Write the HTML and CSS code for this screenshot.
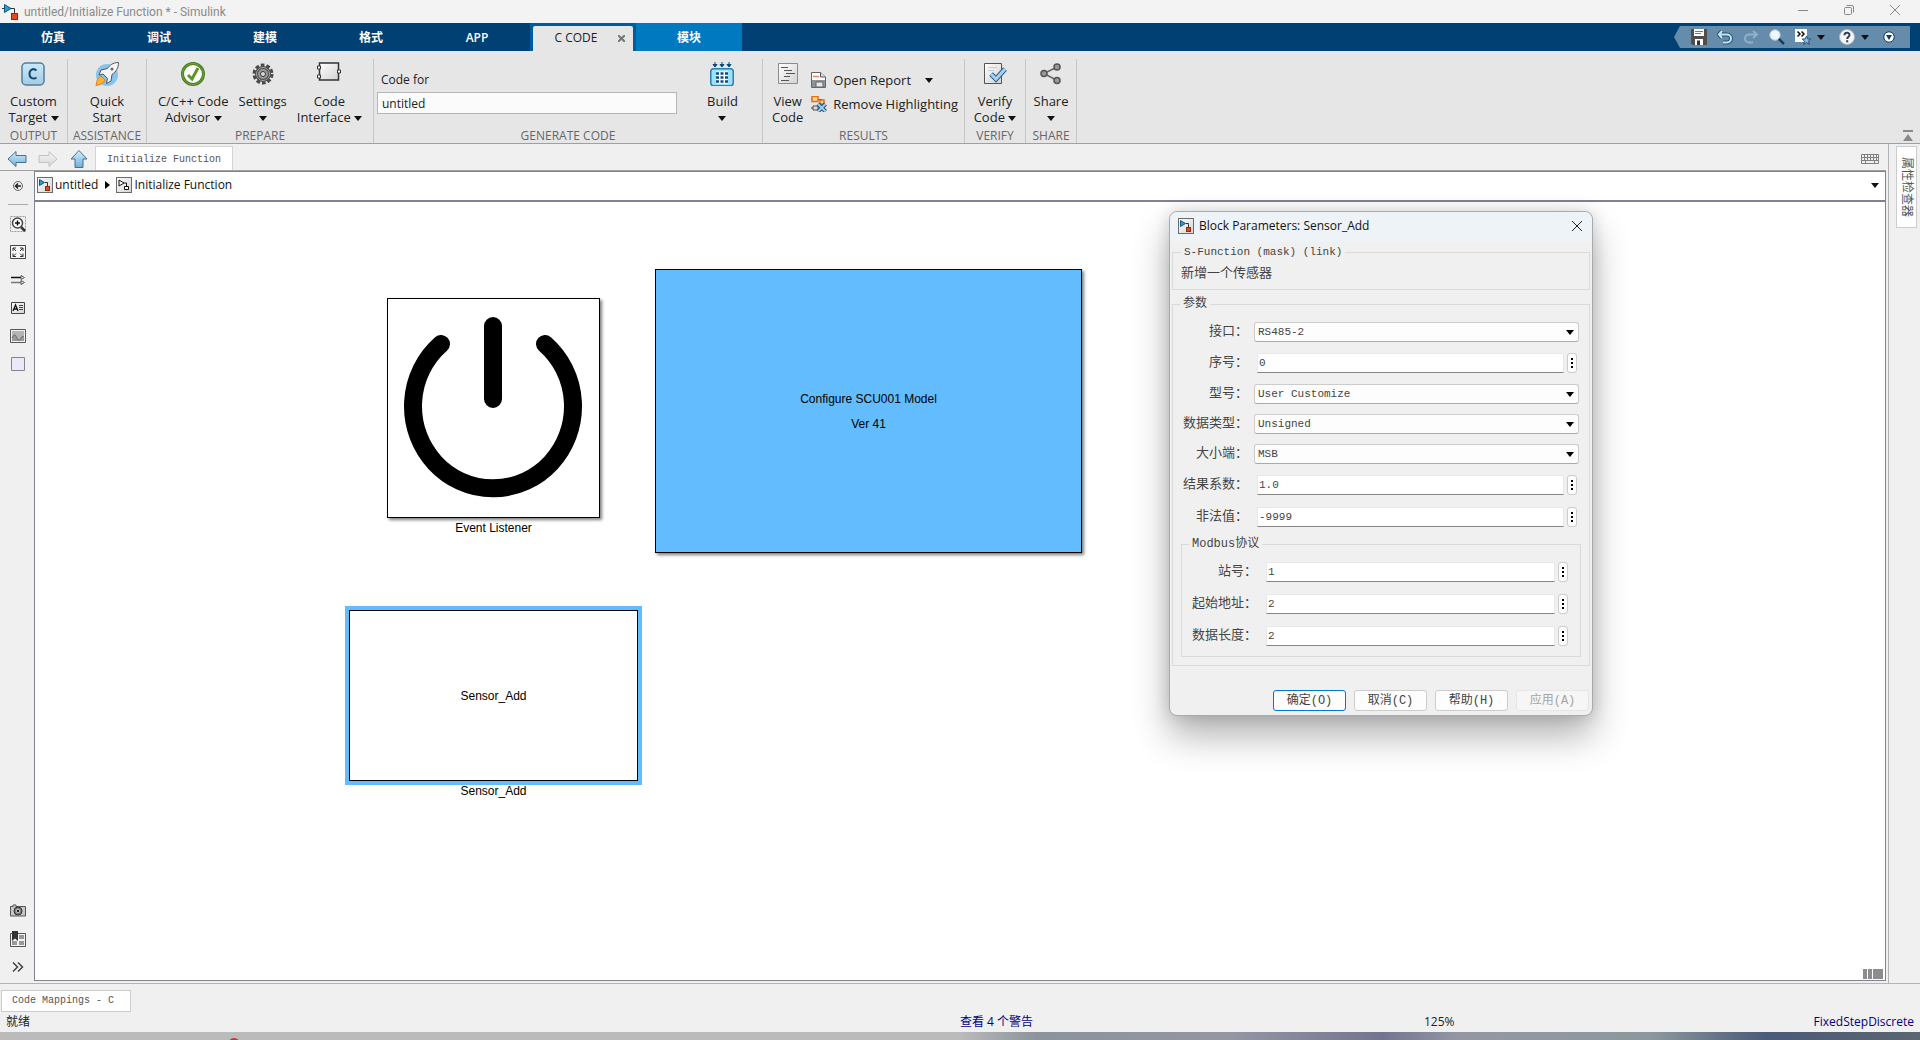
FILE: index.html
```html
<!DOCTYPE html>
<html lang="zh-CN">
<head>
    <meta charset="UTF-8">
    <meta name="viewport" content="width=device-width, initial-scale=1.0">
    <title>untitled/Initialize Function * - Simulink</title>
    <link rel="stylesheet" href="styles.css">
</head>
<body>
    <!-- shared icons -->
    <svg class="defs" aria-hidden="true">
        <defs>
            <linearGradient id="gBlue" x1="0" y1="0" x2="0" y2="1"><stop offset="0" stop-color="#d5eefb"/><stop offset="1" stop-color="#6fb0d8"/></linearGradient>
            <linearGradient id="gTarget" x1="0" y1="0" x2="0" y2="1"><stop offset="0" stop-color="#c9eafa"/><stop offset="1" stop-color="#a5cbe2"/></linearGradient>
            <linearGradient id="gPale" x1="0" y1="0" x2="0" y2="1"><stop offset="0" stop-color="#f4f4f4"/><stop offset="1" stop-color="#d8d8d8"/></linearGradient>
            <linearGradient id="gPaper" x1="0" y1="0" x2="1" y2="1"><stop offset="0" stop-color="#ffffff"/><stop offset="1" stop-color="#d2d2d2"/></linearGradient>
            <symbol id="model" viewBox="0 0 16 16">
                <rect x=".5" y=".5" width="15" height="15" fill="url(#gPaper)" stroke="#6b6b6b"/>
                <path d="M8 5.500h2.500V9" fill="none" stroke="#333"/>
                <path d="M2.500 2.500v6L7.500 5.500z" fill="#2b9bd6" stroke="#14557d"/>
                <rect x="8.500" y="9.500" width="4" height="4" fill="#e8481c" stroke="#8f2a0c"/>
            </symbol>
            <symbol id="subsystem" viewBox="0 0 16 16">
                <rect x=".5" y=".5" width="15" height="15" fill="url(#gPaper)" stroke="#6b6b6b"/>
                <path d="M3 3v6l5-3zM8 6h2.500v3M8.500 9.500h4v3h-4z" fill="#fff" stroke="#111"/>
            </symbol>
        </defs>
    </svg>

    <header class="titlebar">
        <svg class="i16" viewBox="0 0 16 16"><path d="M0 4.500h3M8 4.500h4.500v5" fill="none" stroke="#333"/><path d="M2.500 .5v8L9 4.500z" fill="#2b9bd6" stroke="#14557d"/><rect x="9.500" y="9.500" width="6" height="6" fill="#e8481c" stroke="#8f2a0c"/></svg>
        <span class="title">untitled/Initialize Function * - Simulink</span>
        <div class="window-buttons">
            <button aria-label="最小化"><svg viewBox="0 0 10 10"><path d="M0 5.500h10"/></svg></button>
            <button aria-label="还原"><svg viewBox="0 0 10 10"><rect x=".5" y="2.500" width="7" height="7" rx="1"/><path d="M2.500.5h5.500a1.500 1.500 0 0 1 1.500 1.500v5.500"/></svg></button>
            <button aria-label="关闭"><svg viewBox="0 0 10 10"><path d="M0 0l10 10M10 0L0 10"/></svg></button>
        </div>
    </header>

    <nav class="tabs">
        <button class="tab">仿真</button>
        <button class="tab">调试</button>
        <button class="tab">建模</button>
        <button class="tab">格式</button>
        <button class="tab">APP</button>
        <div class="tab-active">
            <button class="tab-name">C CODE</button>
            <button class="tab-close" aria-label="关闭"><svg viewBox="0 0 7 7"><path d="M0 0l7 7M7 0L0 7"/></svg></button>
        </div>
        <button class="tab tab-context">模块</button>
        <div class="quick-access">
            <button aria-label="保存"><svg class="i16" viewBox="0 0 16 16"><path d="M0 0h16v16H1.500L0 14.500z" fill="#514d4b"/><path d="M3 0h10v7H3z" fill="#fff"/><path d="M4 2.500h8M4 4.500h6" stroke="#777"/><path d="M4 10h8v6H4z" fill="#fff"/><path d="M6 11.500h3V16H6z" fill="#333"/></svg></button>
            <button aria-label="撤销"><svg class="i16" viewBox="0 0 16 16"><path d="M5 2L2 5.500 5 9M2.500 5.500H10a3.500 3.500 0 0 1 0 8H6" fill="none" stroke="#2b5273" stroke-width="4"/><path d="M5 2L2 5.500 5 9M2.500 5.500H10a3.500 3.500 0 0 1 0 8H6" fill="none" stroke="#c4e4f7" stroke-width="2"/></svg></button>
            <button aria-label="重做" disabled><svg class="i16" viewBox="0 0 16 16"><path d="M10 2l4 3.500L10 9M13.500 5.500H6a3.500 3.500 0 0 0 0 8h4" fill="none" stroke="#8fb0c9" stroke-width="2"/></svg></button>
            <button aria-label="搜索"><svg class="i16" viewBox="0 0 16 16"><path d="M9 9l6 6" stroke="#143f68" stroke-width="2.500"/><circle cx="6" cy="6" r="5.200" fill="#edf6fb" stroke="#b5c9d6"/></svg></button>
            <button class="wide" aria-label="收藏"><svg class="i16" viewBox="0 0 16 16"><path d="M0 0h12v13H0z" fill="#fff"/><path d="M2.500 2.500L5 5 2.500 7.500M6.500 2.500L9 5 6.500 7.500" fill="none" stroke="#111" stroke-width="1.500"/><path d="M11.500 7l1.300 3h3l-2.300 2 1 3.500-3-2-3 2 1-3.500-2.300-2h3z" fill="#8fb8da" stroke="#29517a"/></svg><i class="caret"></i></button>
            <button class="wide" aria-label="帮助"><svg class="i16" viewBox="0 0 16 16"><circle cx="8" cy="8" r="7.500" fill="#f5f5f5" stroke="#a9b7c2"/><path d="M5.500 6.200C5.500 3 10.500 3 10.500 6c0 1.700-2.300 1.800-2.300 4M8.200 11.300v2" fill="none" stroke="#2b3f55" stroke-width="2"/></svg><i class="caret"></i></button>
            <button aria-label="更多"><svg class="i12" viewBox="0 0 12 12"><circle cx="6" cy="6" r="5.200" fill="#fff" stroke="#0b3c66"/><path d="M3 4h6L6 9z" fill="#0b3c66"/></svg></button>
        </div>
    </nav>

    <section class="ribbon">
        <div class="group group-output">
            <div class="group-items">
                <button class="tool">
                    <svg class="i24" viewBox="0 0 24 24"><rect x="1" y="1" width="22" height="22" rx="4" fill="url(#gTarget)" stroke="#4f7f9e" stroke-width="1.500"/><path d="M15.500 8.500C12 5.500 8.500 8 8.500 12c0 4.500 4 5.500 7 3.500" fill="none" stroke="#134a75" stroke-width="2"/></svg>
                    <span>Custom<br>Target <i class="caret"></i></span>
                </button>
            </div>
            <div class="group-name">OUTPUT</div>
        </div>
        <div class="group group-assistance">
            <div class="group-items">
                <button class="tool">
                    <svg class="i24" viewBox="0 0 24 24"><circle cx="12" cy="13" r="11" fill="#85c4f0"/><path d="M6 14l4 4c-2 4-5 4-9 6 1-5 1-8 5-10z" fill="#ffb52e" stroke="#e0781b"/><path d="M23.500.5c-6 0-9 3-11 6L6 8l-2 5 4-1 4.500 4.500-1 5L16 19l1-6.500c4-3 6.500-6 6.500-12z" fill="#f6f6f6" stroke="#555"/><circle cx="17" cy="7" r="1.500" fill="#666"/></svg>
                    <span>Quick<br>Start</span>
                </button>
            </div>
            <div class="group-name">ASSISTANCE</div>
        </div>
        <div class="group group-prepare">
            <div class="group-items">
                <button class="tool">
                    <svg class="i24" viewBox="0 0 24 24"><circle cx="12" cy="12" r="10.500" fill="#fdfdfd" stroke="#4c7a22" stroke-width="3"/><circle cx="12" cy="12" r="10.500" fill="none" stroke="#74a83c"/><path d="M7 13l4 4 6-11" fill="none" stroke="#5d9626" stroke-width="3"/></svg>
                    <span>C/C++ Code<br>Advisor <i class="caret"></i></span>
                </button>
                <button class="tool">
                    <svg class="i24" viewBox="0 0 24 24"><circle cx="12" cy="12" r="9" fill="none" stroke="#4a4a4a" stroke-width="3" stroke-dasharray="3.700 2"/><circle cx="12" cy="12" r="6.500" fill="#9a9a9a" stroke="#4a4a4a" stroke-width="3"/><circle cx="12" cy="12" r="6.500" fill="none" stroke="#a5a5a5"/><circle cx="12" cy="12" r="2.500" fill="#ddd" stroke="#333"/></svg>
                    <span>Settings<br><i class="caret"></i></span>
                </button>
                <button class="tool">
                    <svg class="i24" viewBox="0 0 24 24"><path d="M2.500 1h19v17h-19z" fill="url(#gPaper)" stroke="#333" stroke-width="1.500"/><path d="M.5 4h3v3h-3zM.5 13h3v3h-3zM20.500 8h3v3h-3z" fill="#fff" stroke="#333"/></svg>
                    <span>Code<br>Interface <i class="caret"></i></span>
                </button>
            </div>
            <div class="group-name">PREPARE</div>
        </div>
        <div class="group group-generate">
            <div class="group-items">
                <div class="code-for">
                    <label for="codeFor">Code for</label>
                    <input type="text" id="codeFor" value="untitled">
                </div>
                <button class="tool">
                    <svg class="i24" viewBox="0 0 24 24"><path d="M5 0v4M12 0v4M19 0v4M3 2.500h4L5 5zM10 2.500h4L12 5zM17 2.500h4L19 5z" fill="#0c4a80" stroke="#0c4a80"/><rect x=".75" y="6.750" width="22.500" height="17" rx="3" fill="#9be2fb" stroke="#2f7fae" stroke-width="1.500"/><path d="M6 11.500h12M6 15.500h12M6 19.500h12" stroke="#fff" stroke-width="4"/><path d="M6 11.500h12M6 15.500h12M6 19.500h12" stroke="#0c4a80" stroke-width="2.500" stroke-dasharray="3 1.500"/></svg>
                    <span>Build<br><i class="caret"></i></span>
                </button>
            </div>
            <div class="group-name">GENERATE CODE</div>
        </div>
        <div class="group group-results">
            <div class="group-items">
                <button class="tool">
                    <svg class="i24" viewBox="0 0 24 24"><path d="M2.500 1.500h19v20h-19z" fill="url(#gPaper)" stroke="#8c8c8c"/><path d="M5 5.500h7M8 8.500h8M10 11.500h9M8 14.500h6M5 18.500h8" stroke="#555"/></svg>
                    <span>View<br>Code</span>
                </button>
                <div class="tool-rows">
                    <button class="tool-row">
                        <svg class="i16" viewBox="0 0 16 16"><path d="M.5.500h9l5 4.500v10.500H.5z" fill="#fff" stroke="#666"/><path d="M9.500.500V5h5" fill="#ddd" stroke="#555"/><path d="M2 4.500h6" stroke="#e9825a" stroke-width="1.500"/><path d="M1 8h13v7H1z" fill="#8d9499"/><path d="M5 10h7v5H5z" fill="#e6e6e6" stroke="#666"/></svg>
                        Open Report <i class="caret"></i>
                    </button>
                    <button class="tool-row">
                        <svg class="i16" viewBox="0 0 16 16"><path d="M0 3h1M6 3.500h5v3M0 12h6" fill="none" stroke="#333"/><path d="M1 .5h6v5H1zM9 4h4v4H9z" fill="#ffd9a0" stroke="#e2701b" stroke-width="1.500"/><path d="M2 10h5v4H2z" fill="#ddd" stroke="#555"/><path d="M7 8l7.500 7.500M14.500 8L7 15.500" stroke="#1e4f7c" stroke-width="4"/><path d="M7 8l7.500 7.500M14.500 8L7 15.500" stroke="#a5cdec" stroke-width="2"/></svg>
                        Remove Highlighting
                    </button>
                </div>
            </div>
            <div class="group-name">RESULTS</div>
        </div>
        <div class="group group-verify">
            <div class="group-items">
                <button class="tool">
                    <svg class="i24" viewBox="0 0 24 24"><path d="M1.500 1.500h17v20h-17z" fill="url(#gPaper)" stroke="#555"/><path d="M5 5.500h9M5 8.500h6" stroke="#ccc"/><path d="M8 12l5 5 9-10" fill="none" stroke="#2b5f8e" stroke-width="5"/><path d="M8 12l5 5 9-10" fill="none" stroke="#a8d1ef" stroke-width="3"/></svg>
                    <span>Verify<br>Code <i class="caret"></i></span>
                </button>
            </div>
            <div class="group-name">VERIFY</div>
        </div>
        <div class="group group-share">
            <div class="group-items">
                <button class="tool">
                    <svg class="i24" viewBox="0 0 24 24"><path d="M18 5L5 11.500l13 7" fill="none" stroke="#666" stroke-width="1.500"/><g fill="#999" stroke="#555" stroke-width="1.500"><circle cx="18" cy="5" r="3"/><circle cx="5" cy="11.500" r="3"/><circle cx="18" cy="18.500" r="3"/></g></svg>
                    <span>Share<br><i class="caret"></i></span>
                </button>
            </div>
            <div class="group-name">SHARE</div>
        </div>
        <button class="collapse" aria-label="折叠"><svg viewBox="0 0 10 11"><path d="M0 0h10v2H0zM5 4l5 7H0z"/></svg></button>
    </section>

    <main class="workspace">
        <div class="editor">
            <div class="doc-bar">
                <button aria-label="后退"><svg viewBox="0 0 20 18"><path d="M1 9l8-7.500V5.500h10v7H9v4z" fill="url(#gBlue)" stroke="#466f91"/></svg></button>
                <button aria-label="前进" disabled><svg viewBox="0 0 20 18"><path d="M19 9l-8-7.500V5.500H1v7h10v4z" fill="url(#gPale)" stroke="#c2c2c2"/></svg></button>
                <button aria-label="向上"><svg viewBox="0 0 20 18"><path d="M10 .5l8 8.500h-4v8.500H6V9H2z" fill="url(#gBlue)" stroke="#466f91"/></svg></button>
                <button class="doc-tab">Initialize Function</button>
                <button class="keyboard" aria-label="键盘"><svg viewBox="0 0 18 10"><path d="M.5.500h17v9H.5zM0 3.500h18M0 6.500h18M3.500 0v6M6.500 0v6M9.500 0v6M12.500 0v6M15.500 0v6M4.500 7v3M13.500 7v3" fill="none" stroke="#808080"/></svg></button>
            </div>
            <div class="editor-body">
                <aside class="palette">
                    <button aria-label="隐藏浏览器"><svg viewBox="0 0 16 16"><circle cx="8" cy="8" r="4.500" fill="#eee" stroke="#666"/><path d="M8 5.500L5.500 8 8 10.500M6 8h5" fill="none" stroke="#222" stroke-width="1.500"/></svg></button>
                    <hr>
                    <button aria-label="缩放"><svg viewBox="0 0 16 16"><path d="M.5.500h15v15H.5z" fill="none" stroke="#999" stroke-dasharray="2 1"/><path d="M11 11l4 4" stroke="#333" stroke-width="2.500"/><circle cx="7.500" cy="7" r="5" fill="#fff" stroke="#444" stroke-width="1.500"/><path d="M5 7h5M7.500 4.500v5" stroke="#111" stroke-width="1.500"/></svg></button>
                    <button aria-label="适应窗口"><svg viewBox="0 0 16 16"><path d="M.5 1.500h15v13H.5z" fill="#f6f6f6" stroke="#444"/><path d="M3 7V4h3M3 4l3 3M13 7V4h-3M13 4l-3 3M3 9.500v3h3M3 12.500l3-3M13 9.500v3h-3M13 12.500l-3-3" fill="none" stroke="#333"/></svg></button>
                    <button aria-label="采样时间"><svg viewBox="0 0 16 16"><path d="M1 5.500h10" stroke="#111" stroke-width="1.500"/><path d="M1 10.500h10" stroke="#777" stroke-width="1.500"/><path d="M11 3.500l3.500 2L11 7.500zM11 8.500l3.500 2-3.500 2z" fill="#eee" stroke="#555"/></svg></button>
                    <button aria-label="注释"><svg viewBox="0 0 16 16"><path d="M1.500 2.500h13v11h-13z" fill="url(#gPaper)" stroke="#444"/><path d="M3 11l2.500-6L8 11M4 9h3" fill="none" stroke="#111" stroke-width="1.300"/><path d="M9 5.500h4M9 7.500h4M9 9.500h4" stroke="#444"/></svg></button>
                    <button aria-label="图像"><svg viewBox="0 0 16 16"><path d="M.5 1.500h15v13H.5z" fill="#f4f4f4" stroke="#555"/><path d="M2 3h12v10H2z" fill="#b4b4b4"/><path d="M2 10c2-4 3-4 5 0s3 2 4 0 2-2 3-1v4H2z" fill="#999"/><path d="M2 10c2-4 3-4 5 0s3 2 4 0 2-2 3-1" fill="none" stroke="#666"/></svg></button>
                    <button aria-label="区域"><svg viewBox="0 0 16 16"><path d="M1.500 1.500h13v13h-13z" fill="#e9e9f8" stroke="#85858f"/></svg></button>
                    <div class="spacer"></div>
                    <button aria-label="截图"><svg viewBox="0 0 16 16"><path d="M.5 3.500H3V2h3v1.500h9.500v9.500H.5z" fill="#c6c6c6" stroke="#555"/><circle cx="8" cy="8" r="4" fill="#777" stroke="#333"/><circle cx="8" cy="8" r="1.800" fill="#222" stroke="#ccc"/></svg></button>
                    <button aria-label="书签"><svg viewBox="0 0 16 16"><path d="M.5 2.500h15v13H.5z" fill="#f4f4f4" stroke="#555"/><path d="M9 4h5v4H9zM2 10h5v4H2zM9 10h5v4H9z" fill="#999"/><path d="M2 0h6v10L5 7.500 2 10z" fill="#333"/></svg></button>
                    <button aria-label="更多"><svg viewBox="0 0 16 16"><path d="M3 3.500L7.500 8 3 12.500M8 3.500L12.500 8 8 12.500" fill="none" stroke="#444" stroke-width="1.500"/></svg></button>
                </aside>
                <div class="view">
                    <nav class="crumbs">
                        <svg class="i16"><use href="#model"/></svg>
                        <a href="#">untitled</a>
                        <i class="crumb-arrow"></i>
                        <svg class="i16"><use href="#subsystem"/></svg>
                        <a href="#">Initialize Function</a>
                        <button aria-label="展开"><i class="caret"></i></button>
                    </nav>
                    <div class="canvas">
                        <div class="block block-event">
                            <svg viewBox="0 0 211 218"><g fill="none" stroke="#000" stroke-width="18" stroke-linecap="round"><path d="M53 45A80 82 0 1 0 157 45M105 27v73"/></g></svg>
                            <span class="block-name">Event Listener</span>
                        </div>
                        <div class="block block-config">
                            <p>Configure SCU001 Model</p>
                            <p>Ver 41</p>
                        </div>
                        <div class="block block-sensor">
                            <p>Sensor_Add</p>
                            <span class="block-name">Sensor_Add</span>
                        </div>
                        <svg class="panes" viewBox="0 0 20 10"><path d="M0 0h4v10H0zM5 0h4v10H5zM10 0h10v10H10z" fill="#8c8c8c"/></svg>
                    </div>
                </div>
            </div>
        </div>
        <aside class="inspector">
            <button class="inspector-tab">属性检查器</button>
        </aside>
    </main>

    <section class="bottom-tabs">
        <button class="mapping-tab">Code Mappings - C</button>
    </section>
    <footer class="status">
        <span>就绪</span>
        <a href="#">查看 4 个警告</a>
        <span class="zoom">125%</span>
        <a href="#">FixedStepDiscrete</a>
    </footer>
    <div class="desktop"><i class="red-dot"></i></div>

    <div class="dialog" role="dialog" aria-labelledby="dialogTitle">
        <div class="dialog-title">
            <svg class="i16"><use href="#model"/></svg>
            <span id="dialogTitle">Block Parameters: Sensor_Add</span>
            <button aria-label="关闭"><svg viewBox="0 0 10 10"><path d="M0 0l10 10M10 0L0 10"/></svg></button>
        </div>
        <form>
            <fieldset>
                <legend>S-Function (mask) (link)</legend>
                <p>新增一个传感器</p>
            </fieldset>
            <fieldset class="params">
                <legend>参数</legend>
                <div class="row">
                    <label for="port">接口：</label>
                    <div class="select"><select id="port"><option>RS485-2</option></select></div>
                </div>
                <div class="row row-text">
                    <label for="serial">序号：</label>
                    <div class="text"><input type="text" id="serial" value="0"><button type="button" class="dots" aria-label="更多"></button></div>
                </div>
                <div class="row">
                    <label for="model-type">型号：</label>
                    <div class="select"><select id="model-type"><option>User Customize</option></select></div>
                </div>
                <div class="row">
                    <label for="data-type">数据类型：</label>
                    <div class="select"><select id="data-type"><option>Unsigned</option></select></div>
                </div>
                <div class="row">
                    <label for="endian">大小端：</label>
                    <div class="select"><select id="endian"><option>MSB</option></select></div>
                </div>
                <div class="row row-text">
                    <label for="factor">结果系数：</label>
                    <div class="text"><input type="text" id="factor" value="1.0"><button type="button" class="dots" aria-label="更多"></button></div>
                </div>
                <div class="row row-text">
                    <label for="invalid">非法值：</label>
                    <div class="text"><input type="text" id="invalid" value="-9999"><button type="button" class="dots" aria-label="更多"></button></div>
                </div>
                <fieldset class="modbus">
                    <legend>Modbus协议</legend>
                    <div class="row row-text">
                        <label for="station">站号：</label>
                        <div class="text"><input type="text" id="station" value="1"><button type="button" class="dots" aria-label="更多"></button></div>
                    </div>
                    <div class="row row-text">
                        <label for="address">起始地址：</label>
                        <div class="text"><input type="text" id="address" value="2"><button type="button" class="dots" aria-label="更多"></button></div>
                    </div>
                    <div class="row row-text">
                        <label for="length">数据长度：</label>
                        <div class="text"><input type="text" id="length" value="2"><button type="button" class="dots" aria-label="更多"></button></div>
                    </div>
                </fieldset>
            </fieldset>
            <div class="dialog-buttons">
                <button type="button" class="primary">确定(O)</button>
                <button type="button">取消(C)</button>
                <button type="button">帮助(H)</button>
                <button type="button" disabled>应用(A)</button>
            </div>
        </form>
    </div>
</body>
</html>
```
FILE: styles.css
```css
* {
    box-sizing: border-box;
}
body {
    margin: 0;
    height: 100vh;
    display: flex;
    flex-direction: column;
    overflow: hidden;
    position: relative;
    background-color: #f0f0f0;
    color: #222;
    font-family: "Open Sans", "Noto Sans CJK SC", sans-serif;
    font-size: 12px;
    line-height: 16px;
}
button, input, select {
    font: inherit;
    color: inherit;
    margin: 0;
    padding: 0;
    border: none;
    background: none;
}
a {
    color: inherit;
    text-decoration: none;
}
p {
    margin: 0;
}
svg {
    display: block;
    flex: none;
}
.defs {
    position: absolute;
    width: 0;
    height: 0;
}
.i12 {
    width: 12px;
    height: 12px;
}
.i16 {
    width: 16px;
    height: 16px;
}
.i24 {
    width: 24px;
    height: 24px;
}
.caret {
    display: inline-block;
    border: 4px solid transparent;
    border-top: 5px solid #111;
    border-bottom: 0;
    vertical-align: 1px;
}

/* title bar */
.titlebar {
    height: 23px;
    display: flex;
    align-items: center;
    gap: 6px;
    padding-left: 2px;
    background-color: #f3f3f3;
    color: #8a8a8a;
    font-family: Roboto, sans-serif;
}
.window-buttons {
    align-self: flex-start;
    margin-left: auto;
    padding-right: 2px;
    display: flex;
}
.window-buttons button {
    width: 46px;
    height: 20px;
    display: flex;
    align-items: center;
    justify-content: center;
}
.window-buttons svg, .dialog-title button svg {
    width: 10px;
    height: 10px;
    fill: none;
    stroke: #888;
}

/* ribbon tabs */
.tabs {
    height: 28px;
    display: flex;
    background-color: #004072;
    color: #fff;
}
.tab {
    width: 106px;
    padding-top: 1px;
    font-weight: 600;
}
.tab-active {
    width: 106px;
    padding: 3px 3px 0;
    display: flex;
    align-items: stretch;
    background-color: #005d9b;
    color: #222;
}
.tab-name {
    flex: 1;
    padding: 0 0 2px 10px;
    background-color: #e6e6e6;
    border-radius: 2px 0 0 0;
}
.tab-close {
    width: 24px;
    background-color: #e6e6e6;
    border-radius: 0 2px 0 0;
}
.tab-close svg {
    width: 7px;
    height: 7px;
    margin-left: 9px;
    stroke: #777;
    stroke-width: 2;
}
.tab-context {
    background-color: #0079c1;
}
.quick-access {
    margin: 3px 10px 3px auto;
    padding: 0 15px 0 17px;
    display: flex;
    align-items: center;
    gap: 10px;
    background-color: #668cac;
    clip-path: polygon(6px 0, 100% 0, 100% 100%, 6px 100%, 0 50%);
}
.quick-access button {
    display: flex;
    align-items: center;
}
.quick-access .wide {
    gap: 6px;
    margin-right: 4px;
}

/* ribbon */
.ribbon {
    height: 93px;
    display: flex;
    background-color: #e6e6e6;
    border-bottom: 1px solid #a0a0a0;
}
.group {
    margin-top: 8px;
    display: flex;
    flex-direction: column;
    border-right: 1px solid #c6c6c6;
}
.group-output {
    width: 68px;
}
.group-assistance {
    width: 79px;
}
.group-prepare {
    width: 227px;
}
.group-generate {
    width: 389px;
}
.group-results {
    width: 202px;
}
.group-verify {
    width: 61px;
}
.group-share {
    width: 51px;
}
.group-items {
    flex: 1;
    display: flex;
    justify-content: center;
    gap: 6px;
}
.group-name {
    line-height: 14px;
    text-align: center;
    color: #666;
}
.tool {
    display: flex;
    flex-direction: column;
    align-items: center;
    gap: 7px;
    padding: 3px 2px 0;
    font-size: 13px;
    white-space: nowrap;
}
.code-for {
    width: 300px;
    margin-left: 3px;
    padding-top: 13px;
}
.code-for label {
    display: block;
    padding-left: 4px;
}
.code-for input {
    width: 100%;
    height: 22px;
    margin-top: 4px;
    padding: 0 4px;
    border: 1px solid #b5b5b5;
    background-color: #fbfbfb;
}
.group-generate .tool {
    margin: 0 auto;
}
.group-results .group-items {
    justify-content: flex-start;
    padding-left: 7px;
}
.tool-rows {
    display: flex;
    flex-direction: column;
    gap: 8px;
    padding-top: 13px;
}
.tool-row {
    display: flex;
    align-items: center;
    gap: 6px;
    font-size: 13px;
    white-space: nowrap;
}
.tool-row .caret {
    margin-left: 8px;
}
.collapse {
    align-self: flex-end;
    margin: 0 7px 2px auto;
}
.collapse svg {
    width: 10px;
    height: 11px;
    fill: #8a8a8a;
}

/* editor */
.workspace {
    flex: 1;
    min-height: 0;
    display: flex;
    border-bottom: 1px solid #b4b4b4;
}
.editor {
    flex: 1;
    display: flex;
    flex-direction: column;
    padding-bottom: 2px;
}
.doc-bar {
    height: 27px;
    display: flex;
    align-items: center;
    gap: 11px;
    padding: 3px 7px 0;
    border-bottom: 1px solid #a0a0a0;
}
.doc-bar svg {
    width: 20px;
    height: 18px;
}
.doc-bar .doc-tab {
    align-self: flex-end;
    height: 24px;
    margin-left: -5px;
    padding: 2px 11px 0;
    background-color: #fff;
    border: 1px solid #d4d4d4;
    border-bottom: 0;
    color: #555;
    font-family: "Liberation Mono", monospace;
    font-size: 10px;
}
.keyboard {
    margin-left: auto;
}
.doc-bar .keyboard svg {
    width: 18px;
    height: 10px;
}
.editor-body {
    flex: 1;
    display: flex;
}
.palette {
    width: 34px;
    display: flex;
    flex-direction: column;
    align-items: center;
    gap: 12px;
    padding: 7px 0 6px 2px;
}
.palette svg {
    width: 16px;
    height: 16px;
}
.palette hr {
    width: 20px;
    margin: -2px 0 -1px;
    border: 0;
    border-top: 1px solid #aaa;
}
.spacer {
    flex: 1;
}
.view {
    flex: 1;
    display: flex;
    flex-direction: column;
    border: 1px solid #80848f;
    background-color: #fff;
}
.crumbs {
    height: 30px;
    display: flex;
    align-items: center;
    gap: 2px;
    padding: 0 6px 2px 2px;
    border-bottom: 2px solid #80848f;
    color: #111;
}
.crumb-arrow {
    margin: 0 4px 0 5px;
    border: 4px solid transparent;
    border-left: 5px solid #000;
    border-right: 0;
}
.crumbs button {
    margin-left: auto;
}
.canvas {
    flex: 1;
    position: relative;
    color: #000;
    font-family: "Liberation Sans", Arial, sans-serif;
}
.block {
    position: absolute;
    display: flex;
    flex-direction: column;
    align-items: center;
    justify-content: center;
    gap: 9px;
    background-color: #fff;
    border: 1px solid #000;
    box-shadow: 2px 2px 3px rgba(0, 0, 0, 0.5);
}
.block-event {
    left: 352px;
    top: 96px;
    width: 213px;
    height: 220px;
}
.block-event svg {
    width: 100%;
    height: 100%;
}
.block-config {
    left: 620px;
    top: 67px;
    width: 427px;
    height: 284px;
    background-color: #62bcfe;
}
.block-sensor {
    left: 314px;
    top: 408px;
    width: 289px;
    height: 171px;
    box-shadow: 0 0 0 4px #62bcfe;
}
.block-name {
    position: absolute;
    top: 100%;
    margin-top: 3px;
}
.panes {
    position: absolute;
    right: 2px;
    bottom: 1px;
    width: 20px;
    height: 10px;
}
.inspector {
    width: 32px;
    margin-left: 2px;
    padding: 2px 2px 0 7px;
    border-left: 1px solid #b4b4b4;
}
.inspector-tab {
    height: 82px;
    width: 21px;
    background-color: #fff;
    border: 1px solid #ccc;
    color: #555;
    writing-mode: vertical-rl;
    text-orientation: sideways;
}

/* bottom */
.bottom-tabs {
    padding: 6px 1px 0;
    height: 28px;
}
.mapping-tab {
    display: block;
    height: 22px;
    padding: 0 16px 0 10px;
    background-color: #fff;
    border: 1px solid #ccc;
    color: #555;
    font-family: "Liberation Mono", monospace;
    font-size: 10px;
}
.status {
    height: 20px;
    display: grid;
    grid-template-columns: 50% 24% 1fr auto;
    align-items: center;
    padding: 0 6px;
}
.status a {
    color: #000080;
}
.zoom {
    padding-left: 6px;
}
.desktop {
    height: 8px;
    position: relative;
    overflow: hidden;
    background: linear-gradient(90deg, #bbb 50%, #8b949c 54%, #9596a3 64%, #73758f 72%, #9497a3 76%, #8c989d 86%, #4b5a78 92%, #5b6670);
}
.red-dot {
    position: absolute;
    left: 228px;
    top: 6px;
    width: 12px;
    height: 12px;
    border-radius: 50%;
    background-color: #c33;
}

/* block parameters dialog */
.dialog {
    position: absolute;
    top: 211px;
    right: 327px;
    width: 424px;
    background-color: #f0f0f0;
    border: 1px solid #aaa;
    border-radius: 8px;
    box-shadow: 0 20px 36px rgba(0, 0, 0, 0.3), 0 0 16px rgba(0, 0, 0, 0.15);
    color: #444;
    font-family: "Liberation Mono", "Noto Sans CJK SC", monospace;
    font-size: 11px;
}
.dialog-title {
    height: 30px;
    display: flex;
    align-items: center;
    gap: 5px;
    padding: 0 10px 2px 8px;
    border-radius: 8px 8px 0 0;
    background-color: #eef3f8;
    color: #111;
    font-family: "Open Sans", sans-serif;
}
.dialog-title span {
    font-size: 12px;
}
.dialog-title button {
    margin-left: auto;
}
.dialog-title button svg {
    stroke: #222;
}
fieldset {
    min-width: 0;
    margin: 2px 2px 0;
    padding: 4px 8px 5px;
    border: 1px solid #dadada;
}
legend {
    height: 16px;
    padding: 0 3px;
}
fieldset p {
    font-size: 13px;
    line-height: 20px;
}
.params {
    margin-top: 6px;
    padding: 5px 0 8px;
}
.params legend {
    margin-left: 7px;
    font-size: 12px;
}
.row {
    height: 30px;
    display: grid;
    grid-template-columns: 75px 1fr;
    gap: 6px;
    align-items: center;
    padding-right: 10px;
}
.row-text {
    height: 32px;
}
.row label {
    font-size: 13px;
    text-align: right;
    white-space: nowrap;
}
.select {
    position: relative;
}
.select select {
    display: block;
    width: 100%;
    height: 20px;
    padding: 0 3px;
    appearance: none;
    background-color: #fdfdfd;
    border: 1px solid #ccc;
    border-bottom-color: #aaa;
    border-radius: 3px;
}
.select::after {
    content: "";
    position: absolute;
    right: 5px;
    top: 8px;
    border: 4px solid transparent;
    border-top: 5px solid #000;
    border-bottom: 0;
    pointer-events: none;
}
.text {
    display: flex;
    gap: 3px;
    padding: 0 2px 0 3px;
}
.text input {
    flex: 1;
    min-width: 0;
    height: 20px;
    padding: 0 1px;
    background-color: #fff;
    border: 1px solid #e8e8e8;
    border-bottom-color: #868686;
}
.dots {
    width: 10px;
    height: 20px;
    border: 1px solid #ccc;
    border-radius: 3px;
    background: repeating-linear-gradient(#000 0 2px, transparent 2px 4px) center / 2px 10px no-repeat #fdfdfd;
}
.modbus {
    margin: 3px 8px 0;
    padding: 4px 0;
}
.dialog-buttons {
    display: flex;
    justify-content: flex-end;
    gap: 8px;
    padding: 24px 3px 4px;
}
.dialog-buttons button {
    width: 73px;
    height: 21px;
    background-color: #fdfdfd;
    border: 1px solid #ccc;
    border-radius: 3px;
    font-size: 12px;
}
.dialog-buttons .primary {
    border-color: #0078d4;
}
.dialog-buttons button:disabled {
    background-color: #f6f6f6;
    border-color: #e6e6e6;
    color: #a5a5a5;
}
```
